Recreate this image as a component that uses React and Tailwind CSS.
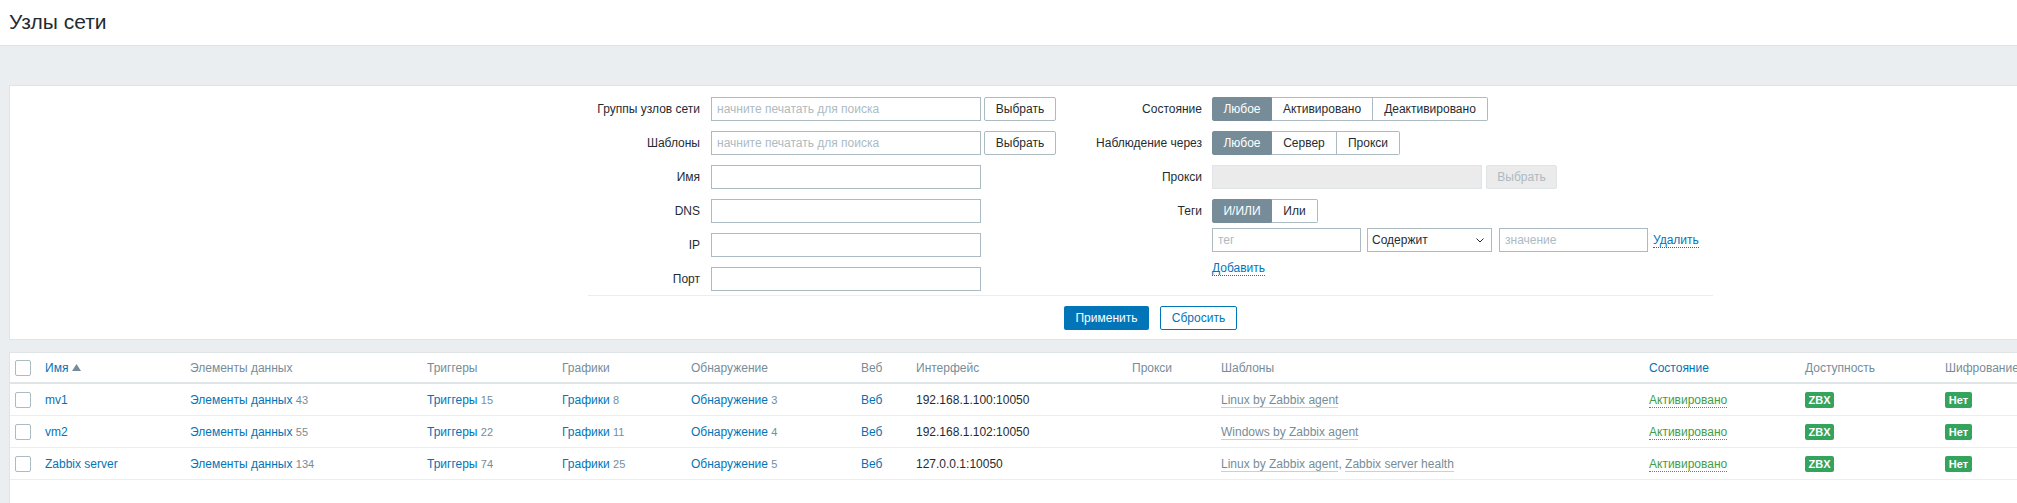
import React from "react";

const ROW =
  "grid grid-cols-[30px_145px_237px_135px_129px_170px_55px_216px_89px_428px_156px_140px_350px] items-center";

function Seg({ items, widths, active = 0 }) {
  return (
    <div className="flex h-6">
      {items.map((t, i) => (
        <div
          key={t}
          style={{ width: widths[i] }}
          className={
            "flex items-center justify-center border-y border-r " +
            (i === 0 ? "border-l rounded-l-[2px] " : "") +
            (i === items.length - 1 ? "rounded-r-[2px] " : "") +
            (i === active
              ? "bg-[#768d99] border-[#768d99] text-white"
              : "bg-white border-[#acbbc2] text-[#1f2c33]")
          }
        >
          {t}
        </div>
      ))}
    </div>
  );
}

function TextInput({ w = "w-[270px]", placeholder = "" }) {
  return (
    <input
      className={
        w +
        " h-6 border border-[#acbbc2] bg-white px-[5px] text-[12px] outline-none placeholder:text-[#acbbc2]"
      }
      placeholder={placeholder}
      readOnly
    />
  );
}

function SelectBtn({ disabled }) {
  return (
    <div
      className={
        "ml-[3px] flex h-6 w-[72px] items-center justify-center rounded-[2px] border " +
        (disabled
          ? "border-[#dfe4e7] bg-[#ebebeb] text-[#acbbc2]"
          : "border-[#acbbc2] bg-white text-[#1f2c33]")
      }
    >
      Выбрать
    </div>
  );
}

function LRow({ label, children }) {
  return (
    <div className="flex h-6 items-center">
      <div className="w-[112px] shrink-0 text-right">{label}</div>
      <div className="ml-[11px] flex items-center">{children}</div>
    </div>
  );
}

function RRow({ label, children }) {
  return (
    <div className="flex h-6 items-center">
      <div className="w-[112px] shrink-0 text-right whitespace-nowrap">{label}</div>
      <div className="ml-[10px] flex items-center">{children}</div>
    </div>
  );
}

function Cb() {
  return <div className="h-4 w-4 rounded-[2px] border border-[#acbbc2] bg-white" />;
}

function Badge({ children, w }) {
  return (
    <span
      className={
        w +
        " inline-flex h-4 items-center justify-center rounded-[2px] bg-[#34a35c] text-[11px] font-bold text-white"
      }
    >
      {children}
    </span>
  );
}

function Tpl({ children }) {
  return (
    <span className="border-b border-[#c7d1d6] text-[#768d99]">{children}</span>
  );
}

const hosts = [
  {
    name: "mv1",
    items: 43,
    triggers: 15,
    graphs: 8,
    disc: 3,
    iface: "192.168.1.100:10050",
    tpl: ["Linux by Zabbix agent"],
  },
  {
    name: "vm2",
    items: 55,
    triggers: 22,
    graphs: 11,
    disc: 4,
    iface: "192.168.1.102:10050",
    tpl: ["Windows by Zabbix agent"],
  },
  {
    name: "Zabbix server",
    items: 134,
    triggers: 74,
    graphs: 25,
    disc: 5,
    iface: "127.0.0.1:10050",
    tpl: ["Linux by Zabbix agent", "Zabbix server health"],
  },
];

function LinkCount({ label, n }) {
  return (
    <span className="whitespace-nowrap">
      <span className="text-[#0275b8]">{label}</span>{" "}
      <span className="text-[11px] text-[#768d99]">{n}</span>
    </span>
  );
}

export default function App() {
  return (
    <div className="h-[503px] w-full overflow-hidden bg-[#ebeef0] font-['Liberation_Sans',Arial,sans-serif] text-[12px] text-[#1f2c33]">
      <div className="flex h-[540px] w-[2300px] flex-col">
        {/* Header */}
        <div className="flex h-[46px] shrink-0 items-center border-b border-[#dfe4e7] bg-white pl-[9px]">
          <h1 className="text-[21px] leading-[24px] font-normal text-[#1f2c33] -mt-px">Узлы сети</h1>
        </div>

        {/* Filter panel */}
        <div className="ml-[9px] mt-[39px] w-[2282px] shrink-0 border border-[#dfe4e7] bg-white pt-[11px] pb-[9px]">
          <div className="ml-[578px] w-[1125px]">
            <div className="flex items-start">
              <div className="flex w-[502px] flex-col gap-[10px]">
                <LRow label="Группы узлов сети">
                  <TextInput placeholder="начните печатать для поиска" />
                  <SelectBtn />
                </LRow>
                <LRow label="Шаблоны">
                  <TextInput placeholder="начните печатать для поиска" />
                  <SelectBtn />
                </LRow>
                <LRow label="Имя">
                  <TextInput />
                </LRow>
                <LRow label="DNS">
                  <TextInput />
                </LRow>
                <LRow label="IP">
                  <TextInput />
                </LRow>
                <LRow label="Порт">
                  <TextInput />
                </LRow>
              </div>
              <div className="flex flex-col">
                <RRow label="Состояние">
                  <Seg
                    items={["Любое", "Активировано", "Деактивировано"]}
                    widths={[60, 101, 115]}
                  />
                </RRow>
                <div className="mt-[10px]">
                  <RRow label="Наблюдение через">
                    <Seg items={["Любое", "Сервер", "Прокси"]} widths={[60, 65, 63]} />
                  </RRow>
                </div>
                <div className="mt-[10px]">
                  <RRow label="Прокси">
                    <div className="h-6 w-[270px] border border-[#dfe4e7] bg-[#ebebeb]" />
                    <div className="ml-[4px] flex h-6 w-[71px] items-center justify-center rounded-[2px] border border-[#dfe4e7] bg-[#ebebeb] text-[#acbbc2]">
                      Выбрать
                    </div>
                  </RRow>
                </div>
                <div className="mt-[10px]">
                  <RRow label="Теги">
                    <Seg items={["И/ИЛИ", "Или"]} widths={[60, 46]} />
                  </RRow>
                </div>
                <div className="ml-[122px] mt-[5px] flex h-6 items-center">
                  <TextInput w="w-[149px]" placeholder="тег" />
                  <div className="ml-[6px] flex h-6 w-[125px] items-center justify-between border border-[#acbbc2] bg-white pl-[4px] pr-[7px]">
                    <span>Содержит</span>
                    <svg width="8" height="5" viewBox="0 0 8 5">
                      <polyline
                        points="0.5,0.5 4,4 7.5,0.5"
                        fill="none"
                        stroke="#1f2c33"
                        strokeWidth="1"
                      />
                    </svg>
                  </div>
                  <div className="ml-[7px]">
                    <TextInput w="w-[149px]" placeholder="значение" />
                  </div>
                  <span className="ml-[5px] border-b border-dotted border-[#0275b8] text-[#0275b8] leading-[14px]">
                    Удалить
                  </span>
                </div>
                <div className="ml-[122px] mt-[9px] flex">
                  <span className="border-b border-dotted border-[#0275b8] text-[#0275b8] leading-[14px]">
                    Добавить
                  </span>
                </div>
              </div>
            </div>
            <div className="mt-[4px] border-t border-[#ebeef0]" />
            <div className="mt-[10px] flex justify-center gap-[11px]">
              <div className="flex h-6 w-[85px] items-center justify-center rounded-[2px] bg-[#0275b8] text-white">
                Применить
              </div>
              <div className="flex h-6 w-[77px] items-center justify-center rounded-[2px] border border-[#0275b8] bg-white text-[#0275b8]">
                Сбросить
              </div>
            </div>
          </div>
        </div>

        {/* Table */}
        <div className="ml-[9px] mt-[12px] w-[2282px] grow border border-[#dfe4e7] bg-white">
          <div className={ROW + " h-[31px] border-b-2 border-[#dfe4e7] text-[#768d99]"}>
            <div className="pl-[5px]">
              <Cb />
            </div>
            <div className="flex items-center pl-[5px] text-[#0275b8]">
              Имя
              <svg className="ml-[4px]" width="9" height="7" viewBox="0 0 9 7">
                <polygon points="4.5,0 9,7 0,7" fill="#768d99" />
              </svg>
            </div>
            <div className="pl-[5px]">Элементы данных</div>
            <div className="pl-[5px]">Триггеры</div>
            <div className="pl-[5px]">Графики</div>
            <div className="pl-[5px]">Обнаружение</div>
            <div className="pl-[5px]">Веб</div>
            <div className="pl-[5px]">Интерфейс</div>
            <div className="pl-[5px]">Прокси</div>
            <div className="pl-[5px]">Шаблоны</div>
            <div className="pl-[5px] text-[#0275b8]">Состояние</div>
            <div className="pl-[5px]">Доступность</div>
            <div className="pl-[5px]">Шифрование</div>
          </div>
          {hosts.map((h) => (
            <div key={h.name} className={ROW + " h-[32px] border-b border-[#ebeef0]"}>
              <div className="pl-[5px]">
                <Cb />
              </div>
              <div className="pl-[5px] text-[#0275b8]">{h.name}</div>
              <div className="pl-[5px]">
                <LinkCount label="Элементы данных" n={h.items} />
              </div>
              <div className="pl-[5px]">
                <LinkCount label="Триггеры" n={h.triggers} />
              </div>
              <div className="pl-[5px]">
                <LinkCount label="Графики" n={h.graphs} />
              </div>
              <div className="pl-[5px]">
                <LinkCount label="Обнаружение" n={h.disc} />
              </div>
              <div className="pl-[5px] text-[#0275b8]">Веб</div>
              <div className="pl-[5px]">{h.iface}</div>
              <div className="pl-[5px]"></div>
              <div className="pl-[5px] whitespace-nowrap">
                {h.tpl.map((t, i) => (
                  <React.Fragment key={t}>
                    {i > 0 && <span className="text-[#768d99]">, </span>}
                    <Tpl>{t}</Tpl>
                  </React.Fragment>
                ))}
              </div>
              <div className="pl-[5px]">
                <span className="border-b border-dotted border-[#429e47] text-[#429e47]">
                  Активировано
                </span>
              </div>
              <div className="pl-[5px]">
                <Badge w="w-[29px]">ZBX</Badge>
              </div>
              <div className="pl-[5px]">
                <Badge w="w-[27px]">Нет</Badge>
              </div>
            </div>
          ))}
        </div>
      </div>
    </div>
  );
}
